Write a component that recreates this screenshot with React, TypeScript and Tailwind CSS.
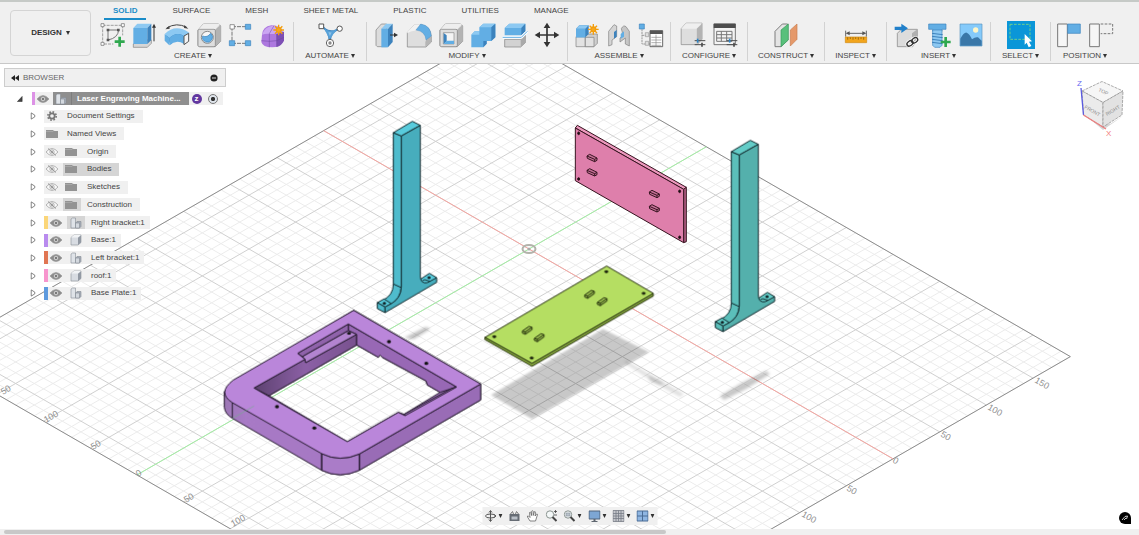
import { useState } from 'react';
import type { ReactNode } from 'react';
import clsx from 'clsx';

const BLUE = '#62aee4';
const BLUE_LIGHT = '#8dc9f2';
const BLUE_DARK = '#3d83bd';
const LINE = '#7d7d7d';

/* ---------- Toolbar icons (78 x 78 grid, shown at 26px) ---------- */

const GreenPlus = ({ x, y }: { x: number; y: number }) => (
  <path d={`M${x - 15} ${y}h30M${x} ${y - 15}v30`} stroke="#2fa84f" strokeWidth="8" />
);

const Spark = ({ x, y }: { x: number; y: number }) => (
  <g stroke="#f29d0c" strokeWidth="4">
    <path d={`M${x - 16} ${y}h32M${x} ${y - 16}v32M${x - 11} ${y - 11}l22 22M${x - 11} ${y + 11}l22 -22`} />
    <circle cx={x} cy={y} r="7" fill="#f7a81c" />
  </g>
);

const GrayBox = () => (
  <>
    <path d="M6 24L22 6H68L74 12V58L58 74H10L6 70Z" fill="#dcdcdc" stroke={LINE} strokeWidth="2" />
    <path d="M6 24L22 6H72L56 24Z" fill="#eeeeee" />
    <path d="M57 24L74 8V58L57 74Z" fill="#b3b3b3" />
    <path d="M6 26Q6 22 10 22H54Q58 22 58 26V70Q58 74 54 74H10Q6 74 6 70Z" fill="#dedede" stroke={LINE} strokeWidth="2" />
  </>
);

const Sliders = ({ x, y }: { x: number; y: number }) => (
  <g stroke="#4c4c4c" strokeWidth="3">
    <path d={`M${x} ${y}h32M${x} ${y + 12}h32`} />
    <path d={`M${x + 9} ${y - 6}v12`} stroke="#2e86c8" strokeWidth="5" />
    <path d={`M${x + 22} ${y + 6}v12`} strokeWidth="5" />
  </g>
);

const icons: Record<string, ReactNode> = {
  sketch: (
    <>
      <path d="M8 10H68V40M8 10V66H40" stroke="#777" strokeWidth="2" strokeDasharray="9 3" />
      <path d="M24 24H56Q54 48 24 54Z" stroke="#777" strokeWidth="3" />
      <g fill="#fff" stroke="#666" strokeWidth="2">
        <path d="M3 5h9v9h-9zM64 5h9v9h-9zM3 61h9v9h-9z" />
      </g>
      <path d="M20 20h8v8h-8zM51 20h8v8h-8zM20 50h8v8h-8z" fill="#555" />
      <GreenPlus x={59} y={59} />
    </>
  ),
  extrude: (
    <>
      <path d="M4 66L18 54H58V64L46 76H4Z" fill="#d6d6d6" stroke={LINE} strokeWidth="2" />
      <path d="M4 18L16 5H58L46 18Z" fill={BLUE_LIGHT} />
      <path d="M4 18H46V66H4Z" fill={BLUE} />
      <path d="M46 18L58 5V54L46 66Z" fill={BLUE_DARK} />
      <path d="M66 58V12" stroke="#333" strokeWidth="3" />
      <path d="M60 17L66 5L72 17Z" fill="#333" />
    </>
  ),
  revolve: (
    <>
      <path d="M6 38Q38 8 74 34L66 58Q40 42 20 68Z" fill={BLUE_DARK} />
      <path d="M2 36Q34 4 76 32L60 42Q38 28 16 48Z" fill={BLUE_LIGHT} />
      <path d="M2 36L16 48V70L2 56Z" fill={BLUE} />
      <path d="M16 48Q38 28 60 42L60 66Q38 50 16 70Z" fill={BLUE} />
      <path d="M60 42L74 34V58L60 68Z" fill="#f4f4f4" stroke="#555" strokeWidth="3" />
      <path d="M8 18Q38 0 68 16" stroke="#444" strokeWidth="3" />
      <path d="M4 22L16 11L17 20ZM73 20L61 9L60 18Z" fill="#444" />
    </>
  ),
  hole: (
    <>
      <GrayBox />
      <circle cx="34" cy="46" r="18" fill="#f6f6f6" stroke="#8a8a8a" strokeWidth="3" />
      <path d="M44 34A15 15 0 1 1 20 42Q34 48 44 34Z" fill={BLUE} stroke={BLUE_DARK} strokeWidth="2" />
    </>
  ),
  pattern: (
    <>
      <path d="M12 14V64M12 14H56M12 64H56" stroke="#777" strokeWidth="3" strokeDasharray="12 3" />
      <path d="M6 8h13v13H6z" fill="#fff" stroke="#666" strokeWidth="2" />
      <path d="M52 7h16v15H52zM4 56h16v15H4zM52 56h16v15H52z" fill={BLUE} stroke={BLUE_DARK} strokeWidth="2" />
    </>
  ),
  form: (
    <>
      <path d="M6 38Q8 14 34 10Q64 10 70 32V56Q60 76 36 76Q8 76 4 60Z" fill="#ad78df" />
      <path d="M6 38Q14 14 38 11Q60 12 66 28Q52 38 34 36Q18 34 6 38Z" fill="#cba6f2" />
      <path d="M50 36Q70 32 72 28V56Q64 72 50 75Z" fill="#7d4fb5" />
      <path d="M4 56Q30 60 50 56L72 46M28 35V76M50 36V75M28 35L42 11" stroke="#6d479f" strokeWidth="1.500" />
      <Spark x={56} y={24} />
    </>
  ),
  automate: (
    <>
      <path d="M14 12Q38 30 38 58Q40 30 66 20M22 20Q40 34 58 24" stroke={BLUE_DARK} strokeWidth="6" />
      <path d="M20 18Q38 34 60 22L38 52Z" fill={BLUE} opacity="0.7" />
      <path d="M6 6h14v14H6z" fill="#fff" stroke="#555" strokeWidth="3" />
      <circle cx="68" cy="20" r="8" fill="#fff" stroke="#555" strokeWidth="3" />
      <circle cx="39" cy="63" r="11" fill="#fff" stroke="#666" strokeWidth="3" />
      <circle cx="39" cy="63" r="5" fill="#888" />
    </>
  ),
  pressPull: (
    <>
      <path d="M6 24L22 6H38V74H10L6 70Z" fill="#dcdcdc" stroke={LINE} strokeWidth="2" />
      <path d="M22 20L36 5H56L42 20Z" fill={BLUE_LIGHT} />
      <path d="M22 20H42V76H22Z" fill={BLUE} />
      <path d="M42 20L56 5V60L42 76Z" fill={BLUE_DARK} />
      <path d="M48 39H64" stroke="#333" strokeWidth="3" />
      <path d="M60 32L72 39L60 46Z" fill="#333" />
    </>
  ),
  fillet: (
    <>
      <path d="M4 32L26 8H46Q74 14 76 44V60L60 75H4Z" fill="#dedede" stroke={LINE} strokeWidth="2" />
      <path d="M4 30L26 7L44 7L26 26Q14 26 4 34Z" fill="#f2f2f2" />
      <path d="M58 60V75L76 60V42L62 48Z" fill="#b5b5b5" />
      <path d="M30 24L44 6Q74 10 76 42L60 54Q58 28 30 24Z" fill={BLUE} stroke={BLUE_DARK} strokeWidth="1" />
    </>
  ),
  shell: (
    <>
      <GrayBox />
      <path d="M16 32H48V66H16Z" fill="#f4f4f4" stroke="#888" strokeWidth="2" />
      <path d="M17 33L26 40V58L17 66Z" fill={BLUE_DARK} />
      <path d="M17 66L26 56H48V66Z" fill={BLUE} />
    </>
  ),
  combine: (
    <>
      <path d="M4 38L14 28H28V16L40 5H76V46L64 57H50V65L40 76H4Z" fill={BLUE} />
      <path d="M28 16L40 5H76L64 16Z" fill={BLUE_LIGHT} />
      <path d="M64 16L76 5V46L64 57Z" fill={BLUE_DARK} />
      <path d="M4 38L14 28H28V38Z" fill={BLUE_LIGHT} />
      <path d="M40 76V57H50V65Z" fill={BLUE_DARK} />
    </>
  ),
  split: (
    <>
      <path d="M8 52H56L70 40V62L56 75H8Z" fill="#d2d2d2" stroke={LINE} strokeWidth="2" />
      <path d="M56 52L70 40V62L56 75Z" fill="#a9a9a9" />
      <path d="M8 18L22 5H70V28L58 40H8Z" fill={BLUE} />
      <path d="M8 18L22 5H70L58 18Z" fill={BLUE_LIGHT} />
      <path d="M58 18L70 5V28L58 40Z" fill={BLUE_DARK} />
      <path d="M2 46H58L76 28" stroke="#fff" strokeWidth="8" />
      <path d="M2 46H58L76 28" stroke={BLUE} strokeWidth="3" />
    </>
  ),
  move: (
    <>
      <path d="M10 39H68M39 10V68" stroke="#333" strokeWidth="5" />
      <path d="M39 2L49 18H29ZM39 76L49 60H29ZM2 39L18 29V49ZM76 39L60 29V49Z" fill="#333" />
    </>
  ),
  component: (
    <>
      <path d="M6 44V74H34V44Z" fill="#e2e2e2" stroke={LINE} strokeWidth="2" />
      <path d="M34 44L42 36H70V64L60 74H34Z" fill="#cfcfcf" stroke={LINE} strokeWidth="2" />
      <path d="M34 46H60V74H34Z" fill="#e2e2e2" stroke={LINE} strokeWidth="2" />
      <path d="M6 20L16 10H44V36L34 46H6Z" fill={BLUE_DARK} />
      <path d="M6 20H34V46H6Z" fill={BLUE} />
      <path d="M6 20L16 10H44L34 20Z" fill={BLUE_LIGHT} />
      <Spark x={58} y={22} />
    </>
  ),
  joint: (
    <>
      <path d="M8 28L24 8L32 12V44L18 54V68L8 72Z" fill="#d5d5d5" stroke={LINE} strokeWidth="2" />
      <path d="M24 30L32 24V44L24 50Z" fill={BLUE_DARK} />
      <path d="M46 20Q52 8 60 14L70 28V72L58 66V48L42 60V48Q54 42 46 20Z" fill="#c6c6c6" stroke={LINE} strokeWidth="2" />
      <path d="M44 36L54 28V44L44 50Z" fill={BLUE} />
    </>
  ),
  drive: (
    <>
      <path d="M12 22V66H36M12 40H30" stroke="#999" strokeWidth="3" strokeDasharray="6 2" />
      <path d="M4 6h15v15H4z" fill={BLUE} stroke={BLUE_DARK} strokeWidth="2" />
      <path d="M22 32h10v12H22zM22 58h10v12H22z" fill="#ddd" stroke="#999" strokeWidth="2" />
      <path d="M36 26H74V74H36Z" fill="#fff" stroke="#666" strokeWidth="3" />
      <path d="M36 26H74V36H36Z" fill="#555" />
      <path d="M40 46H70M40 54H70M40 62H70M40 70H70M54 38V74" stroke="#888" strokeWidth="2" />
    </>
  ),
  configure: (
    <>
      <g transform="translate(-2 -2) scale(0.92)">
        <path d="M6 24L22 6H74V58L58 76H6Z" fill="#dedede" stroke={LINE} strokeWidth="2" />
        <path d="M6 24L22 6H74L56 24Z" fill="#efefef" />
        <path d="M57 24L74 8V58L57 74Z" fill="#b3b3b3" />
      </g>
      <Sliders x={44} y={56} />
    </>
  ),
  configTable: (
    <>
      <path d="M6 6H70V68H6Z" fill="#f4f4f4" stroke="#777" strokeWidth="3" />
      <path d="M5 5H71V18H5Z" fill="#4d4d4d" />
      <path d="M14 28H60V58H14ZM14 38H60M14 48H60M28 28V58M44 28V58" stroke="#777" strokeWidth="3" />
      <Sliders x={44} y={56} />
    </>
  ),
  plane: (
    <>
      <path d="M6 28L28 6H44V54L24 74H6Z" fill="#e4e4e4" stroke={LINE} strokeWidth="3" />
      <path d="M24 24L46 6V54L24 74Z" fill="#58c07b" stroke="#379a5a" strokeWidth="2" />
      <path d="M52 24L72 6V52L52 72Z" fill="#e5996a" stroke="#c87c4d" strokeWidth="2" />
    </>
  ),
  measure: (
    <>
      <path d="M8 26V44M70 26V44M12 34H66" stroke="#666" strokeWidth="3" />
      <path d="M8 34L20 28V40ZM70 34L58 28V40Z" fill="#555" />
      <path d="M7 45H71V62H7Z" fill="#f2a51c" stroke="#d08a10" strokeWidth="2" />
      <path d="M14 46V53M22 46V51M30 46V53M38 46V51M46 46V53M54 46V51M62 46V53" stroke="#7a5208" strokeWidth="2" />
    </>
  ),
  derive: (
    <>
      <path d="M10 34L22 22H70V50L56 74H10Z" fill="#dcdcdc" stroke={LINE} strokeWidth="2" />
      <path d="M54 34L70 22V58L54 74Z" fill="#b0b0b0" />
      <path d="M2 14H22V5L42 19L22 33V24H2Z" fill="#2180ca" />
      <g stroke="#fff" strokeWidth="9">
        <ellipse cx="48" cy="64" rx="10" ry="7" transform="rotate(-35 48 64)" />
        <ellipse cx="62" cy="55" rx="10" ry="7" transform="rotate(-35 62 55)" />
      </g>
      <g stroke="#333" strokeWidth="4">
        <ellipse cx="48" cy="64" rx="10" ry="7" transform="rotate(-35 48 64)" />
        <ellipse cx="62" cy="55" rx="10" ry="7" transform="rotate(-35 62 55)" />
      </g>
    </>
  ),
  fastener: (
    <>
      <path d="M8 6H60V22H48V28H20V22H8Z" fill={BLUE} stroke={BLUE_DARK} strokeWidth="2" />
      <path d="M20 24H48V70L42 76H26L20 70Z" fill={BLUE_LIGHT} stroke={BLUE_DARK} strokeWidth="2" />
      <path d="M18 34L50 38M18 43L50 47M18 52L50 56M18 61L50 65" stroke={BLUE_DARK} strokeWidth="3" />
      <GreenPlus x={59} y={60} />
    </>
  ),
  canvas: (
    <>
      <path d="M6 6H72V72H6Z" fill="#85cafa" stroke="#5a94c0" strokeWidth="2" />
      <circle cx="53" cy="24" r="8" fill="#fff6c8" />
      <path d="M7 50Q18 30 26 32Q34 34 42 52Q52 44 60 46L71 56V71H7Z" fill="#3a77a8" />
    </>
  ),
  select: (
    <>
      <path d="M-3 -3H81V81H-3Z" fill="#0a96d8" />
      <path d="M6 7H66V52H6Z" stroke="#6fd08c" strokeWidth="3" strokeDasharray="8 4" />
      <path d="M50 36L72 58L63 59L70 72L62 76L56 62L50 68Z" fill="#fff" />
    </>
  ),
  capture: (
    <>
      <path d="M5 6H34V74H5Z" fill="#f6f6f6" stroke="#777" strokeWidth="3" />
      <path d="M35 6H73V34H35Z" fill={BLUE} stroke={BLUE_DARK} strokeWidth="2" />
    </>
  ),
  revert: (
    <>
      <path d="M5 6H34V74H5Z" fill="#f6f6f6" stroke="#777" strokeWidth="3" />
      <path d="M38 6H74V35H38" stroke="#777" strokeWidth="3" strokeDasharray="8 4" />
    </>
  ),
};

interface ToolGroup {
  label: string;
  width: string;
  tools: string[];
}

const TOOL_GROUPS: ToolGroup[] = [
  { label: 'CREATE', width: 'w-[201px]', tools: ['sketch', 'extrude', 'revolve', 'hole', 'pattern', 'form'] },
  { label: 'AUTOMATE', width: 'w-[73px]', tools: ['automate'] },
  { label: 'MODIFY', width: 'w-[201px]', tools: ['pressPull', 'fillet', 'shell', 'combine', 'split', 'move'] },
  { label: 'ASSEMBLE', width: 'w-[103px]', tools: ['component', 'joint', 'drive'] },
  { label: 'CONFIGURE', width: 'w-[77px]', tools: ['configure', 'configTable'] },
  { label: 'CONSTRUCT', width: 'w-[77px]', tools: ['plane'] },
  { label: 'INSPECT', width: 'w-[62px]', tools: ['measure'] },
  { label: 'INSERT', width: 'w-[104px]', tools: ['derive', 'fastener', 'canvas'] },
  { label: 'SELECT', width: 'w-[60px]', tools: ['select'] },
  { label: 'POSITION', width: 'w-[68px]', tools: ['capture', 'revert'] },
];

const TABS = ['SOLID', 'SURFACE', 'MESH', 'SHEET METAL', 'PLASTIC', 'UTILITIES', 'MANAGE'];

const Caret = () => (
  <svg viewBox="0 0 4 4" className="h-1 w-1 shrink-0">
    <path d="M0 0H4L2 4Z" fill="#333" />
  </svg>
);

const Toolbar = () => {
  const [activeTab, setActiveTab] = useState('SOLID');

  return (
    <header className="shrink-0 overflow-hidden border-t-2 border-b border-t-[#c6cac7] border-b-[#c8c8c8] bg-[#f0f0f0]">
      <div className="flex pb-0.5 pl-2.5">
        <button className="mt-2 flex h-[46px] w-[81px] shrink-0 items-center justify-center gap-1 rounded-sm border border-[#d4d4d4] font-bold text-[#333]">
          DESIGN <Caret />
        </button>
        <div className="ml-0.5 min-w-0">
          <nav className="ml-[11px] flex gap-[17px]">
            {TABS.map((tab) => (
              <button
                key={tab}
                onClick={() => setActiveTab(tab)}
                className={clsx(
                  'h-[18px] shrink-0 border-b-2 px-[9px] pt-0.5',
                  tab === activeTab ? 'border-[#1a8cc8] font-bold text-[#1a8cc8]' : 'border-transparent'
                )}
              >
                {tab}
              </button>
            ))}
          </nav>
          <div className="mt-0.5 flex divide-x divide-[#d2d2d2]">
            {TOOL_GROUPS.map((group) => (
              <div key={group.label} className={clsx('flex shrink-0 flex-col items-center', group.width)}>
                <div className="flex gap-1.5">
                  {group.tools.map((tool) => (
                    <button key={tool} aria-label={tool} className="h-[26px] w-[26px]">
                      <svg viewBox="0 0 78 78" fill="none" className="h-full w-full overflow-visible">
                        {icons[tool]}
                      </svg>
                    </button>
                  ))}
                </div>
                <button className="flex h-[13px] items-center gap-0.5 pt-[3px]">
                  {group.label} <Caret />
                </button>
              </div>
            ))}
          </div>
        </div>
      </div>
    </header>
  );
};

/* ---------- Browser tree ---------- */

const Eye = ({ hidden = false }: { hidden?: boolean }) => (
  <svg viewBox="0 0 12 8" fill="none" className="h-2 w-3 shrink-0">
    <path d="M0 4Q6 -3 12 4Q6 11 0 4Z" fill={hidden ? '#fafafa' : '#8b8b8b'} stroke="#9a9a9a" strokeWidth="0.7" />
    <circle cx="6" cy="4" r="2.2" fill={hidden ? 'none' : '#f0f0f0'} stroke="#999" strokeWidth="0.7" />
    <circle cx="6" cy="4" r="1.2" fill={hidden ? '#aaa' : '#777'} />
    {hidden && <path d="M2 0.5L10 7.5" stroke="#888" strokeWidth="0.8" />}
  </svg>
);

const Folder = () => (
  <svg viewBox="0 0 12 10" className="h-2.5 w-3 shrink-0">
    <path d="M0 1H7L8 2H12V9H0Z" fill="#939393" />
    <path d="M0 2.5H7L8 1.5" stroke="#b5b5b5" strokeWidth="0.6" fill="none" />
  </svg>
);

const Gear = () => (
  <svg viewBox="0 0 12 12" fill="none" className="h-2.5 w-3 shrink-0">
    <circle cx="6" cy="6" r="5" stroke="#777" strokeWidth="2" strokeDasharray="2 1.93" />
    <circle cx="6" cy="6" r="3.2" stroke="#777" strokeWidth="2" />
  </svg>
);

const Part = () => (
  <svg viewBox="0 0 12 12" className="h-3 w-3 shrink-0">
    <path d="M1 3.5L4 1H11V8.500L8 11H1Z" fill="#d8dce2" stroke="#8b9098" strokeWidth="0.6" />
    <path d="M8 3.500L11 1V8.500L8 11Z" fill="#9299a3" />
    <path d="M1 3.500L4 1H11L8 3.500Z" fill="#f1f3f5" />
  </svg>
);

const Assembly = () => (
  <svg viewBox="0 0 12 12" className="h-3 w-3 shrink-0" stroke="#858b94" strokeWidth="0.6">
    <path d="M1 2L2.500 1H5.500V11H1Z" fill="#dfe3e8" />
    <path d="M5.500 6L7 4.500H11V9.500L9.500 11H5.500Z" fill="#a9b0ba" />
    <path d="M5.500 6H9.500V11H5.500Z" fill="#d3d8de" />
  </svg>
);

interface TreeNode {
  name: string;
  icon: 'gear' | 'folder' | 'part' | 'assembly';
  hidden?: boolean;
  color?: string;
  highlight?: 'row' | 'icon';
}

const TREE: TreeNode[] = [
  { name: 'Document Settings', icon: 'gear' },
  { name: 'Named Views', icon: 'folder' },
  { name: 'Origin', icon: 'folder', hidden: true },
  { name: 'Bodies', icon: 'folder', hidden: true, highlight: 'row' },
  { name: 'Sketches', icon: 'folder', hidden: true },
  { name: 'Construction', icon: 'folder', hidden: true, highlight: 'icon' },
  { name: 'Right bracket:1', icon: 'assembly', color: 'bg-[#fbd679]', highlight: 'icon' },
  { name: 'Base:1', icon: 'part', color: 'bg-[#b98bee]' },
  { name: 'Left bracket:1', icon: 'assembly', color: 'bg-[#e07552]' },
  { name: 'roof:1', icon: 'part', color: 'bg-[#f795cd]' },
  { name: 'Base Plate:1', icon: 'assembly', color: 'bg-[#5d9ade]' },
];

const NODE_ICONS = { gear: <Gear />, folder: <Folder />, part: <Part />, assembly: <Assembly /> };

const TreeRow = ({ node }: { node: TreeNode }) => (
  <li className="flex h-[13px] items-center pl-[26px]">
    <button aria-label={`Expand ${node.name}`} className="mr-2 w-1.5">
      <svg viewBox="0 0 6 9" fill="#fff" className="h-2 w-1.5">
        <path d="M1 1L5 3.500V5.500L1 8Z" stroke="#555" strokeWidth="0.8" />
      </svg>
    </button>
    <div className="flex h-full items-center bg-[#f0f0f0]">
      {node.color && <span className={clsx('h-full w-1', node.color)} />}
      {(node.color || node.hidden) && (
        <button aria-label={`Visibility of ${node.name}`} className="ml-0.5 mr-[5px]">
          <Eye hidden={node.hidden} />
        </button>
      )}
      <div className={clsx('flex h-full items-center', node.highlight === 'row' && 'bg-[#d5d5d5]')}>
        <span
          className={clsx(
            'flex h-full items-center',
            node.color ? 'px-[3px]' : node.hidden ? 'pr-1 pl-0.5' : 'px-0.5',
            node.highlight === 'icon' && 'bg-[#d5d5d5]'
          )}
        >
          {NODE_ICONS[node.icon]}
        </span>
        <span className={clsx('whitespace-nowrap', node.color ? 'pr-[5px] pl-1.5' : node.hidden ? 'pr-2 pl-1.5' : 'pr-2 pl-[7px]')}>
          {node.name}
        </span>
      </div>
    </div>
  </li>
);

const BrowserPanel = () => (
  <aside className="absolute top-1 left-1 w-[222px] text-[#444]">
    <div className="flex h-[19px] items-center border border-[#cdcdcd] bg-[#f0f0f0] px-1.5 text-[#666]">
      <button aria-label="Collapse browser">
        <svg viewBox="0 0 8 6" className="h-1.5 w-2">
          <path d="M4 0V6L0 3ZM8 0V6L4 3Z" fill="#222" />
        </svg>
      </button>
      <span className="ml-1">BROWSER</span>
      <button aria-label="Browser options" className="mr-px ml-auto">
        <svg viewBox="0 0 8 8" className="h-2 w-2">
          <circle cx="4" cy="4" r="3.6" fill="#222" />
          <path d="M2 4H6" stroke="#ddd" />
        </svg>
      </button>
    </div>
    <ul className="mt-[5px] flex h-52 flex-col justify-between">
      <li className="flex h-[13px] items-center pl-[13px]">
        <button aria-label="Collapse root" className="mr-2 w-[7px]">
          <svg viewBox="0 0 7 7" className="h-1.5 w-1.5">
            <path d="M6 0.500V6.500H0.500Z" fill="#444" stroke="#222" strokeWidth="0.6" />
          </svg>
        </button>
        <div className="flex h-full items-center bg-[#f0f0f0] pr-[5px]">
          <span className="h-full w-[3px] bg-[#dd92e6]" />
          <button aria-label="Visibility of root" className="mr-1 ml-0.5">
            <Eye />
          </button>
          <div className="flex h-full items-center bg-[#8f8f8f] pr-2 pl-0.5 font-bold text-white">
            <Assembly />
            <span className="ml-1 h-full border-l border-[#7d7d7d] pl-[5px] leading-[13px] whitespace-nowrap">
              Laser Engraving Machine...
            </span>
          </div>
          <span className="ml-[3px] flex h-2.5 w-2.5 items-center justify-center rounded-full bg-[#62389f] font-bold text-white">
            z
          </span>
          <input
            type="radio"
            defaultChecked
            aria-label="Activate component"
            className="ml-1.5 h-2.5 w-2.5 appearance-none rounded-full border border-[#777] bg-[radial-gradient(#333_30%,#dfe5ec_45%)]"
          />
        </div>
      </li>
      {TREE.map((node) => (
        <TreeRow key={node.name} node={node} />
      ))}
    </ul>
  </aside>
);

/* ---------- Viewport drawing ---------- */

// Grid units are 50mm; u runs along the red axis, v along the green one
const U = { min: -4.4, max: 7.8 };
const V = { min: -8.4, max: 3.8 };

const project = (u: number, v: number) => `${529 + 46.67 * (u + v)} ${249 + 26.9 * (u - v)}`;
const segment = (u1: number, v1: number, u2: number, v2: number) => `M${project(u1, v1)}L${project(u2, v2)}`;

const gridPath = (major: boolean) => {
  const lines: string[] = [];
  for (let i = Math.ceil(U.min * 5); i <= U.max * 5; i++) {
    if ((i % 5 === 0) === major) lines.push(segment(i / 5, V.min, i / 5, V.max));
  }
  for (let i = Math.ceil(V.min * 5); i <= V.max * 5; i++) {
    if ((i % 5 === 0) === major) lines.push(segment(U.min, i / 5, U.max, i / 5));
  }
  return lines.join('');
};

const RULER = [
  { text: '50', x: 3, y: 395, angle: -30 },
  { text: '100', x: 46, y: 423, angle: -30 },
  { text: '50', x: 93, y: 450, angle: -30 },
  { text: '0', x: 138, y: 477, angle: -30 },
  { text: '50', x: 186, y: 503, angle: -30 },
  { text: '100', x: 233, y: 527, angle: -30 },
  { text: '150', x: 1034, y: 382, angle: 30 },
  { text: '100', x: 987, y: 409, angle: 30 },
  { text: '50', x: 940, y: 436, angle: 30 },
  { text: '0', x: 892, y: 462, angle: 30 },
  { text: '50', x: 846, y: 490, angle: 30 },
  { text: '100', x: 801, y: 516, angle: 30 },
];

const Grid = () => (
  <g fill="none">
    <path d={gridPath(false)} stroke="#ececec" />
    <path d={gridPath(true)} stroke="#d0d0d0" />
    <path
      d={`M${project(U.min, V.min)}L${project(U.max, V.min)}L${project(U.max, V.max)}L${project(U.min, V.max)}Z`}
      stroke="#8c8c8c"
    />
    <path d={segment(U.min, 0, U.max, 0)} stroke="#f6a5a0" />
    <path d={segment(0, V.min, 0, V.max)} stroke="#a3f0a3" />
    <ellipse cx="529" cy="249" rx="6.500" ry="4" stroke="#b3b3ab" strokeWidth="2" />
    <circle cx="529" cy="249" r="1.500" fill="#aaa" />
    {RULER.map((mark) => (
      <text
        key={`${mark.x}-${mark.text}`}
        transform={`translate(${mark.x} ${mark.y}) rotate(${mark.angle})`}
        fill="#8e8e8e"
        fontSize="9"
      >
        {mark.text}
      </text>
    ))}
  </g>
);

const Shadows = () => (
  <g fill="#000">
    <path d="M491 395L603 329L649 352L532 419Z" opacity="0.21" filter="url(#soft)" />
    <g filter="url(#softer)">
      <path d="M625 360L684 394L680 397L655 383L626 364Z" opacity="0.12" />
      <path d="M648 375L664 383L660 385L650 381Z" opacity="0.15" />
      <path d="M720 396L740 384L766 371L770 374L746 389L724 400Z" opacity="0.22" />
      <path d="M404 338L426 327L430 329L414 339Z" opacity="0.25" />
    </g>
  </g>
);

const Base = () => (
  <g transform="translate(215 300) scale(0.3333)" stroke="#251a2e" strokeWidth="3" strokeLinejoin="round">
    {/* sides, with the grid left visible through the opening */}
    <path
      fillRule="evenodd"
      d="M28 275V322Q30 342 52 355L320 511Q375 538 432 511L797 300V252L416 31L52 250ZM162 287L425 135L490 172L495 165L502 172L633 243L637 255L675 277L567 343L550 337L397 425Z"
      fill="url(#baseLeft)"
    />
    <path d="M433 462L797 252V300L433 511Z" fill="#996cb6" />
    <path d="M320 461Q375 488 433 462V511Q375 538 320 511Z" fill="#aa7cc8" />
    {/* inner walls */}
    <path d="M117 264L270 178L272 188L425 103V135L162 287Z" fill="url(#baseWall)" />
    <path
      d="M400 72L725 261L675 277L637 255L633 243L502 172L495 165L490 172L425 135V103L400 92Z"
      fill="#9868b5"
    />
    <path d="M248 160L400 72V92L262 170Z" fill="#8f62aa" />
    <path d="M262 170L400 92L425 103L272 188L270 178Z" fill="#b384d0" />
    <path d="M725 261L710 265L567 343L575 347L718 268Z" fill="#a677c3" />
    {/* top face */}
    <path
      fillRule="evenodd"
      d="M416 31L797 252L433 462Q375 488 320 461L52 308Q5 278 55 240ZM117 264L397 425L550 337L570 347L725 261L400 72L248 160L270 178Z"
      fill="#ba86da"
    />
    <path d="M52 308V355M320 461V511M433 462V511" fill="none" />
    <path d="M52 355L117 318" stroke="#72b08a" opacity="0.6" />
    <g fill="#111" stroke="none">
      <ellipse cx="522" cy="125" rx="6" ry="5" />
      <ellipse cx="634" cy="190" rx="6" ry="5" />
      <ellipse cx="186" cy="320" rx="6" ry="5" />
      <ellipse cx="298" cy="384" rx="6" ry="5" />
      <ellipse cx="402" cy="100" rx="6" ry="4" />
    </g>
  </g>
);

interface BracketProps {
  x: number;
  y: number;
  top: string;
  side: string;
  front: string;
}

const Bracket = ({ x, y, top, side, front }: BracketProps) => (
  <g transform={`translate(${x} ${y}) scale(0.3333)`} stroke="#10282c" strokeWidth="3" strokeLinejoin="round">
    <path d="M151 508L178 490L200 503L176 522L151 520Z" fill={top} />
    <path d="M70 68L94 78V530Q92 565 62 585L38 571Q70 556 70 522Z" fill={side} />
    <path d="M70 522L94 533" />
    <path d="M70 68L127 34L151 46L94 78Z" fill={top} />
    <path d="M22 578L42 567L64 581L45 591Z" fill={top} />
    <path d="M22 578L45 591V608L22 596Z" fill={side} />
    <path
      d="M94 78L151 46V500Q152 522 172 518L200 503V517L45 608V591L64 581Q94 563 94 530Z"
      fill={front}
    />
    <path d="M157 512L164 509L180 514" fill="none" />
    <ellipse cx="43" cy="580" rx="4" ry="3" fill="#111" />
    <ellipse cx="177" cy="503" rx="4" ry="3" fill="#111" />
  </g>
);

const Roof = () => (
  <g transform="translate(560 110) scale(0.3333)" stroke="#35141f" strokeWidth="3" strokeLinejoin="round">
    <path d="M46 54L52 46L379 232L371 238Z" fill="#ec98bd" />
    <path d="M371 238L379 232V395L371 398Z" fill="#b8638a" />
    <path d="M46 54L371 238V398L46 212Z" fill="#de7fab" />
    {[[96, 143], [96, 186], [283, 251], [283, 294]].map(([x, y]) => (
      <g key={`${x}-${y}`}>
        <path d={`M${x - 15} ${y - 5}L${x - 7} ${y - 10}L${x + 15} ${y + 1}V${y + 8}L${x + 8} ${y + 12}L${x - 14} ${y + 2}Z`} fill="#c56e95" />
        <path d={`M${x - 15} ${y - 5}L${x + 8} ${y + 5}L${x + 15} ${y + 1}M${x + 8} ${y + 5}V${y + 12}`} fill="none" />
      </g>
    ))}
    {[[56, 70], [56, 207], [359, 244], [359, 382]].map(([x, y]) => (
      <ellipse key={`${x}-${y}`} cx={x} cy={y} rx="3" ry="4" fill="#111" />
    ))}
  </g>
);

const Plate = () => (
  <g transform="translate(470 250) scale(0.3333)" stroke="#26310d" strokeWidth="3" strokeLinejoin="round">
    <path d="M45 262L186 340L550 130V138L186 349L45 269Z" fill="#88a93f" />
    <path d="M410 48L550 130L186 340L45 262Z" fill="#b5de62" />
    {[[358, 132], [396, 154], [171, 240], [207, 262]].map(([x, y]) => (
      <g key={`${x}-${y}`}>
        <path d={`M${x - 14} ${y + 3}L${x + 6} ${y - 11}L${x + 15} ${y - 8}V${y - 1}L${x - 5} ${y + 13}L${x - 14} ${y + 9}Z`} fill="#9bbf50" />
        <path d={`M${x - 14} ${y + 3}L${x - 5} ${y + 6}L${x + 15} ${y - 8}M${x - 5} ${y + 6}V${y + 13}`} fill="none" />
      </g>
    ))}
    {[[409, 65], [521, 130], [73, 260], [185, 324]].map(([x, y]) => (
      <ellipse key={`${x}-${y}`} cx={x} cy={y} rx="5" ry="3" fill="#111" />
    ))}
  </g>
);

const Scene = () => (
  <svg viewBox="0 64 1139 465" preserveAspectRatio="xMidYMid slice" className="absolute inset-0 h-full w-full">
    <defs>
      <filter id="soft">
        <feGaussianBlur stdDeviation="0.8" />
      </filter>
      <filter id="softer">
        <feGaussianBlur stdDeviation="1.6" />
      </filter>
      <linearGradient id="baseLeft">
        <stop offset="0" stopColor="#9d78b5" />
        <stop offset="0.08" stopColor="#a87ac6" />
        <stop offset="1" stopColor="#a376c0" />
      </linearGradient>
      <linearGradient id="baseWall">
        <stop offset="0" stopColor="#5d4270" />
        <stop offset="0.5" stopColor="#8c60a6" />
        <stop offset="1" stopColor="#79528f" />
      </linearGradient>
    </defs>
    <Grid />
    <Shadows />
    <Base />
    <Bracket x={370} y={110} top="#58cbdc" side="#4fbccd" front="#47adbd" />
    <Roof />
    <Bracket x={708} y={129} top="#63ccc7" side="#5bbfba" front="#54b0ac" />
    <Plate />
  </svg>
);

const ViewCube = () => (
  <svg viewBox="0 0 99 80" className="absolute top-0 right-0 h-20 w-[99px]">
    <path d="M45 51L63 66L83 52L70 60Z" fill="#999" opacity="0.4" />
    <g stroke="#8a8a8a" strokeWidth="0.7" strokeDasharray="3 1">
      <path d="M42 27L62 17.500L83 27L63 38.500Z" fill="#f6f6f6" />
      <path d="M42 27L63 38.500V63L43.500 51Z" fill="#ebebeb" />
      <path d="M63 38.500L83 27L82 51L63 63Z" fill="#e2e2e2" />
    </g>
    <path d="M41 24L43.500 51" stroke="#5a5ae0" strokeWidth="1.300" />
    <path d="M43.500 51L66 65" stroke="#ee7f7f" strokeWidth="1.300" />
    <g fill="#8b8b8b" fontSize="5">
      <text transform="translate(58 27) rotate(25)">TOP</text>
      <text transform="translate(44 44) rotate(30)">FRONT</text>
      <text transform="translate(67 52) rotate(-31)">RIGHT</text>
    </g>
    <g fontSize="8">
      <text x="37" y="22" fill="#6a6af0">Z</text>
      <text x="66" y="72" fill="#f27b7b">X</text>
    </g>
  </svg>
);

/* ---------- Navigation bar ---------- */

const NAV_ITEMS: { name: string; menu?: boolean; drawing: ReactNode }[] = [
  {
    name: 'Orbit',
    menu: true,
    drawing: (
      <g stroke="#555" fill="none">
        <ellipse cx="6" cy="6" rx="5" ry="2" />
        <path d="M6 1V11M4.500 2.500L6 0.500L7.500 2.500M4.500 9.500L6 11.500L7.500 9.500M9.500 4.500L11.500 6L9.500 7.500" />
      </g>
    ),
  },
  {
    name: 'Look at',
    drawing: (
      <>
        <path d="M1 4H11V11H1Z" fill="#666c74" />
        <path d="M2 4L4 1.500L5 4M7 4L8 1.500L10 4" stroke="#777" fill="none" />
        <path d="M3 6.500H9V9.500H3Z" fill="#b9bfc7" />
      </>
    ),
  },
  {
    name: 'Pan',
    drawing: (
      <path
        d="M3.500 11L1 7Q0.500 5.500 2 6L3.500 7.500L3 2.500Q3.500 1.500 4.300 2.500L5 5.500L5.200 1.200Q6 0.200 6.700 1.200V5.500L7.800 1.800Q8.700 1 9 2.200L8.600 6L10 4Q11 3.700 11 4.600L9 11Z"
        fill="#fff"
        stroke="#666"
        strokeWidth="0.8"
      />
    ),
  },
  {
    name: 'Zoom',
    drawing: (
      <g fill="none">
        <circle cx="4.500" cy="4.500" r="3.700" fill="#f4f8f8" stroke="#8a9490" />
        <path d="M7 7L11 11" stroke="#444" strokeWidth="2" />
        <path d="M8.500 1.500H11.500M10 0V3M8.500 5H11.500" stroke="#444" strokeWidth="0.8" />
      </g>
    ),
  },
  {
    name: 'Fit',
    menu: true,
    drawing: (
      <g fill="none">
        <circle cx="4.500" cy="4.500" r="3.700" fill="#eef2f4" stroke="#8a9490" />
        <path d="M2.500 3H6.500V6H2.500Z" fill="#b9c2ca" stroke="#8c959d" strokeWidth="0.6" />
        <path d="M7 7L11 11" stroke="#444" strokeWidth="2" />
      </g>
    ),
  },
  {
    name: 'Display settings',
    menu: true,
    drawing: (
      <>
        <path d="M0.500 1H11.500V9H0.500Z" fill="#7da6d4" stroke="#52657c" />
        <path d="M5 9H7V11H9V12H3V11H5Z" fill="#5f6770" />
      </>
    ),
  },
  {
    name: 'Grid and snaps',
    menu: true,
    drawing: (
      <>
        <path d="M0.500 0.500H11.500V11.500H0.500Z" fill="#c5c7cc" />
        <path d="M0.500 0.500H11.500V11.500H0.500ZM0.500 3.500H11.500M0.500 6H11.500M0.500 8.500H11.500M3.500 0.500V11.500M6 0.500V11.500M8.500 0.500V11.500" stroke="#777c86" strokeWidth="0.8" fill="none" />
      </>
    ),
  },
  {
    name: 'Viewports',
    menu: true,
    drawing: <path d="M0.500 1H11.500V11H0.500ZM6 1V11M0.500 6H11.500" fill="#8fb6e2" stroke="#4b6c95" />,
  },
];

const NavBar = () => (
  <div className="absolute bottom-1 left-1/2 flex h-[18px] w-[175px] -translate-x-1/2 items-center justify-between bg-[#f0f0f0] px-0.5">
    {NAV_ITEMS.map((item) => (
      <button key={item.name} aria-label={item.name} className="flex items-center gap-0.5">
        <svg viewBox="0 0 12 12" className="h-3 w-3">
          {item.drawing}
        </svg>
        {item.menu && <Caret />}
      </button>
    ))}
  </div>
);

const App = () => {
  return (
    <div className="flex h-screen flex-col overflow-hidden bg-white font-['Liberation_Sans',Arial,sans-serif] text-[8px] leading-[12px] text-[#444]">
      <Toolbar />
      <main className="relative min-h-0 flex-1 overflow-hidden">
        <Scene />
        <BrowserPanel />
        <ViewCube />
        <NavBar />
        <button
          aria-label="Assistant"
          className="absolute right-2 bottom-[5px] flex h-3 w-3 items-center justify-center rounded-t-full rounded-bl-full bg-black"
        >
          <svg viewBox="0 0 8 8" fill="none" className="h-2 w-2">
            <path d="M1 6L4 2.500L6.500 2L5.500 5M3 6L5 4" stroke="#ddd" strokeWidth="0.9" />
          </svg>
        </button>
      </main>
      <footer className="flex h-1.5 shrink-0 items-center bg-[#f0f0f0] pl-1">
        <div className="h-1 w-7/12 rounded-full bg-[#c8c8c8]" />
      </footer>
    </div>
  );
};

export default App;
